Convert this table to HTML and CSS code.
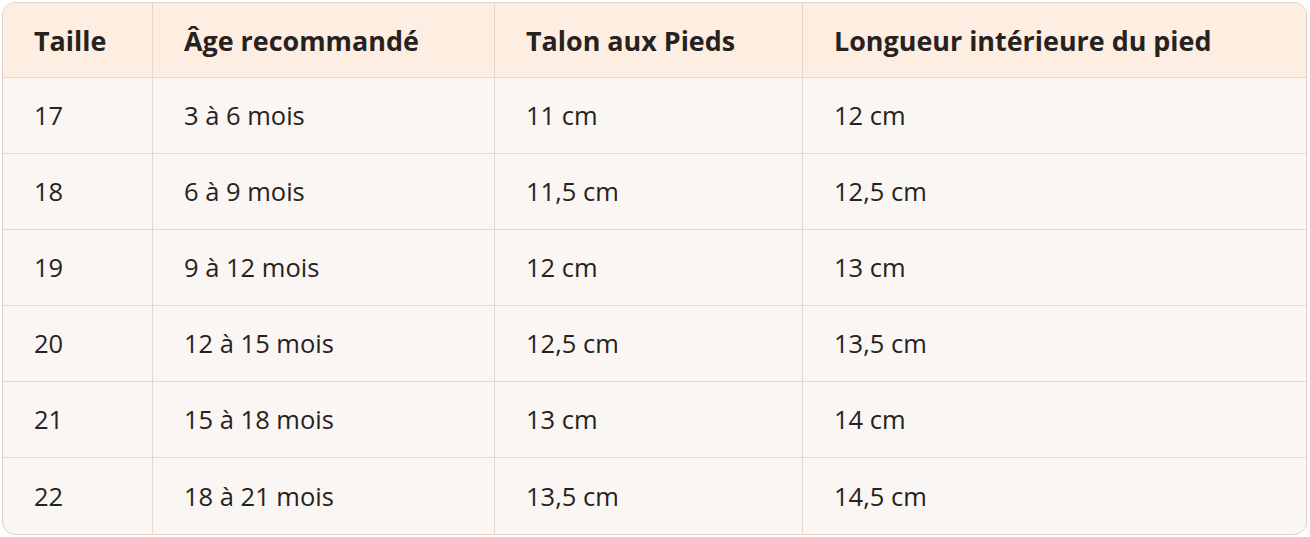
FILE: index.html
```html
<!DOCTYPE html>
<html lang="fr">
<head>
<meta charset="utf-8">
<link rel="stylesheet" href="styles.css">
</head>
<body>
<div class="wrap">
<table class="sizes">
<colgroup><col class="c1"><col class="c2"><col class="c3"><col class="c4"></colgroup>
<thead>
<tr><th>Taille</th><th>Âge recommandé</th><th>Talon aux Pieds</th><th>Longueur intérieure du pied</th></tr>
</thead>
<tbody>
<tr><td>17</td><td>3 à 6 mois</td><td>11 cm</td><td>12 cm</td></tr>
<tr><td>18</td><td>6 à 9 mois</td><td>11,5 cm</td><td>12,5 cm</td></tr>
<tr><td>19</td><td>9 à 12 mois</td><td>12 cm</td><td>13 cm</td></tr>
<tr><td>20</td><td>12 à 15 mois</td><td>12,5 cm</td><td>13,5 cm</td></tr>
<tr><td>21</td><td>15 à 18 mois</td><td>13 cm</td><td>14 cm</td></tr>
<tr><td>22</td><td>18 à 21 mois</td><td>13,5 cm</td><td>14,5 cm</td></tr>
</tbody>
</table>
</div>
</body>
</html>
```
FILE: styles.css
```css
html, body { margin: 0; padding: 0; background: #ffffff; }
body { padding: 2px; }
.wrap {
  width: 1305px;
  border: 1px solid #e2d0c6;
  border-radius: 13px;
  overflow: hidden;
  background: #faf6f3;
  box-sizing: border-box;
}
.sizes {
  width: 100%;
  border-collapse: separate;
  border-spacing: 0;
  table-layout: fixed;
  font-family: "Open Sans", "Liberation Sans", sans-serif;
  color: #272220;
}
.c1 { width: 150px; }
.c2 { width: 342px; }
.c3 { width: 308px; }
.c4 { width: auto; }
.sizes th, .sizes td {
  padding: 0 0 0 31px;
  text-align: left;
  vertical-align: middle;
  border-right: 1px solid #e6d6cc;
  border-bottom: 1px solid #e6d6cc;
  box-sizing: border-box;
}
.sizes th {
  background: #fdeee1;
  font-weight: 700;
  font-size: 26.9px;
  height: 75px;
}
.sizes td { font-weight: 400; font-size: 25.5px; height: 76px; padding-bottom: 1px; }
.sizes th:last-child, .sizes td:last-child { border-right: none; }
.sizes tbody tr:last-child td { border-bottom: none; }
```
